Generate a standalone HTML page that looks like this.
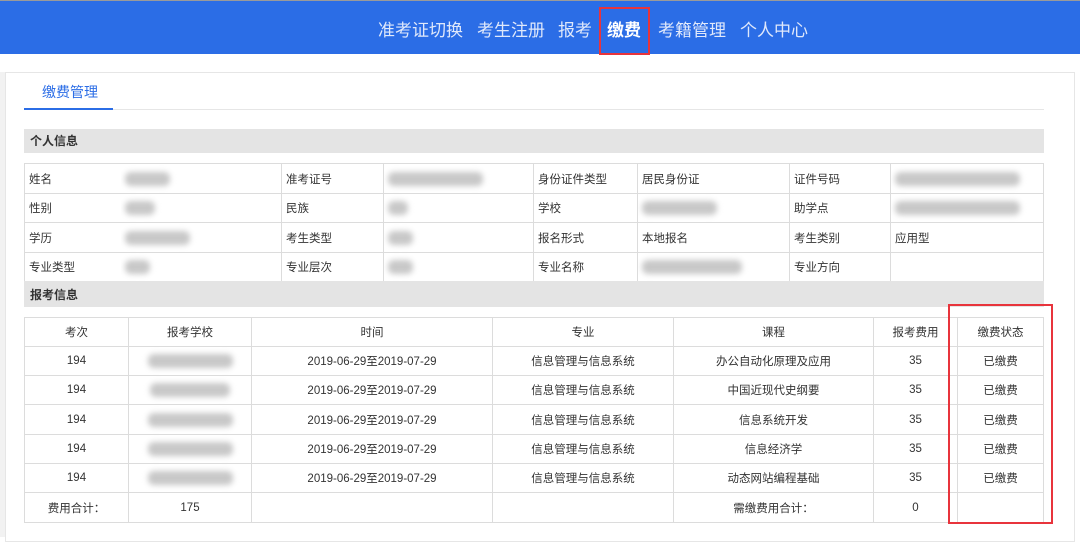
<!DOCTYPE html>
<html><head><meta charset="utf-8"><style>
*{margin:0;padding:0;box-sizing:border-box}
body{width:1080px;height:537px;overflow:hidden;background:#fff;font-family:"Liberation Sans","Noto Sans CJK SC",sans-serif;color:#333;font-size:12px;position:relative}
.nav{position:absolute;left:0;top:0;width:1080px;height:54px;background:#2b6de6;border-top:1px solid #9a9a9a}
.nav span{position:absolute;top:15px;font-size:17px;color:#dfe8fb}
.redbox{position:absolute;border:2px solid #e8343c}
.strip{position:absolute;left:0;top:72px;width:5px;height:465px;background:#f2f2f2}
.card{position:absolute;left:5px;top:72px;width:1070px;height:470px;border:1px solid #e6e6e6;background:#fff}
.tab{position:absolute;left:42px;top:82px;font-size:14px;color:#2b6de6}
.tabline{position:absolute;left:24px;top:109px;width:1020px;height:1px;background:#e6e6e6}
.tabul{position:absolute;left:24px;top:108px;width:89px;height:2px;background:#2b6de6}
.gh{position:absolute;left:24px;width:1020px;background:#e4e4e4;font-weight:bold;font-size:12px;padding-left:6px}
table{position:absolute;border-collapse:collapse;table-layout:fixed}
td{border:1px solid #dcdcdc;font-size:11.5px;padding:0 4px;white-space:nowrap;overflow:hidden}
.blur{display:inline-block;height:14px;background:#c8c8c8;filter:blur(3px);vertical-align:middle;border-radius:6px}
.rt td{text-align:center}
.nr{border-right:none}
.nl{border-left:none}
</style></head><body>
<div class="nav">
<span style="left:378px">准考证切换</span>
<span style="left:477px">考生注册</span>
<span style="left:558px">报考</span>
<span style="left:607px;color:#fff;font-weight:bold">缴费</span>
<span style="left:658px">考籍管理</span>
<span style="left:740px">个人中心</span>
</div>
<div class="redbox" style="left:599px;top:7px;width:51px;height:48px"></div>
<div class="strip"></div>
<div class="card"></div>
<div class="tab">缴费管理</div>
<div class="tabline"></div><div class="tabul"></div>
<div class="gh" style="top:129px;height:24px;line-height:24px">个人信息</div>
<table style="left:24px;top:163px;width:1019px">
<colgroup><col style="width:96px"><col style="width:161px"><col style="width:102px"><col style="width:150px"><col style="width:104px"><col style="width:152px"><col style="width:101px"><col style="width:153px"></colgroup>
<tr style="height:30px"><td class="nr">姓名</td><td class="nl"><span class="blur" style="width:45px"></span></td><td>准考证号</td><td><span class="blur" style="width:95px"></span></td><td>身份证件类型</td><td>居民身份证</td><td>证件号码</td><td><span class="blur" style="width:125px"></span></td></tr>
<tr style="height:29px"><td class="nr">性别</td><td class="nl"><span class="blur" style="width:30px"></span></td><td>民族</td><td><span class="blur" style="width:20px"></span></td><td>学校</td><td><span class="blur" style="width:75px"></span></td><td>助学点</td><td><span class="blur" style="width:125px"></span></td></tr>
<tr style="height:30px"><td class="nr">学历</td><td class="nl"><span class="blur" style="width:65px"></span></td><td>考生类型</td><td><span class="blur" style="width:25px"></span></td><td>报名形式</td><td>本地报名</td><td>考生类别</td><td>应用型</td></tr>
<tr style="height:29px"><td class="nr">专业类型</td><td class="nl"><span class="blur" style="width:25px"></span></td><td>专业层次</td><td><span class="blur" style="width:25px"></span></td><td>专业名称</td><td><span class="blur" style="width:100px"></span></td><td>专业方向</td><td></td></tr>
</table>
<div class="gh" style="top:281px;height:26px;line-height:28px">报考信息</div>
<table class="rt" style="left:24px;top:317px;width:1019px">
<colgroup><col style="width:104px"><col style="width:123px"><col style="width:241px"><col style="width:181px"><col style="width:200px"><col style="width:84px"><col style="width:86px"></colgroup>
<tr style="height:29px"><td>考次</td><td>报考学校</td><td>时间</td><td>专业</td><td>课程</td><td>报考费用</td><td>缴费状态</td></tr>
<tr style="height:29px"><td>194</td><td><span class="blur" style="width:85px"></span></td><td>2019-06-29至2019-07-29</td><td>信息管理与信息系统</td><td>办公自动化原理及应用</td><td>35</td><td>已缴费</td></tr>
<tr style="height:29px"><td>194</td><td><span class="blur" style="width:80px"></span></td><td>2019-06-29至2019-07-29</td><td>信息管理与信息系统</td><td>中国近现代史纲要</td><td>35</td><td>已缴费</td></tr>
<tr style="height:30px"><td>194</td><td><span class="blur" style="width:85px"></span></td><td>2019-06-29至2019-07-29</td><td>信息管理与信息系统</td><td>信息系统开发</td><td>35</td><td>已缴费</td></tr>
<tr style="height:29px"><td>194</td><td><span class="blur" style="width:85px"></span></td><td>2019-06-29至2019-07-29</td><td>信息管理与信息系统</td><td>信息经济学</td><td>35</td><td>已缴费</td></tr>
<tr style="height:29px"><td>194</td><td><span class="blur" style="width:85px"></span></td><td>2019-06-29至2019-07-29</td><td>信息管理与信息系统</td><td>动态网站编程基础</td><td>35</td><td>已缴费</td></tr>
<tr style="height:30px"><td>费用合计：</td><td>175</td><td></td><td></td><td>需缴费用合计：</td><td>0</td><td></td></tr>
</table>
<div class="redbox" style="left:948px;top:304px;width:105px;height:220px"></div>
</body></html>
